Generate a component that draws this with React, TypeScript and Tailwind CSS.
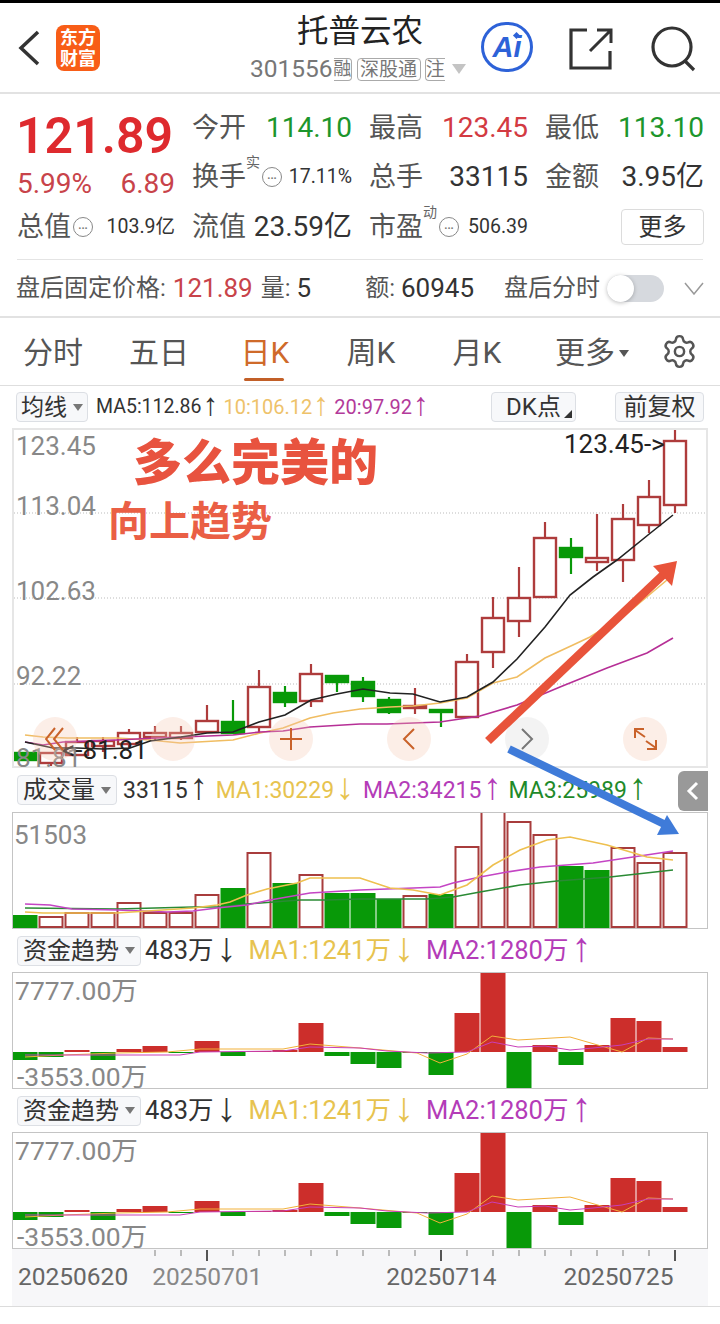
import React from "react";
import { Settings } from "lucide-react";

const FONT = "font-['Roboto','Noto_Sans_CJK_SC',sans-serif]";
const barX = (i: number) => 25 + 26 * i;

// wick top, body top, body bottom, wick bottom, rising
const candles: [number, number, number, number, boolean][] = [
  [753, 753, 760, 760, false],
  [752, 753, 763, 768, true],
  [737, 742, 755, 755, true],
  [737, 741, 746, 752, true],
  [729, 733, 744, 747, true],
  [726, 733, 737, 740, true],
  [726, 733, 738, 740, true],
  [705, 721, 732, 733, true],
  [700, 722, 733, 733, false],
  [670, 687, 727, 733, true],
  [686, 693, 702, 707, false],
  [664, 674, 701, 707, true],
  [676, 676, 682, 692, false],
  [677, 682, 696, 702, false],
  [697, 700, 712, 714, false],
  [688, 706, 708, 714, true],
  [710, 710, 712, 727, false],
  [654, 662, 717, 717, true],
  [597, 618, 652, 668, true],
  [567, 598, 621, 637, true],
  [522, 538, 597, 597, true],
  [538, 548, 557, 574, false],
  [514, 558, 562, 571, true],
  [504, 519, 560, 582, true],
  [480, 497, 525, 533, true],
  [428, 441, 505, 513, true],
];

const ma5 = "25,742 53,748 77,748 103,749 130,748 150,741 181,737 207,733 233,732 259,722 285,715 311,700 337,694 363,689 390,693 413,694 440,702 467,697 493,682 517,659 545,627 570,595 593,577 617,560 648,535 673,515";
const ma10 = "25,735 43,737 67,738 117,738 150,740 180,743 233,740 260,733 283,728 310,718 333,713 360,709 390,707 413,706 440,703 467,698 493,683 517,677 545,658 573,645 590,637 625,615 667,580";
const ma20 = "25,742 43,745 63,742 117,740 157,738 233,735 260,732 283,731 310,727 360,724 387,724 440,722 480,716 517,705 560,687 607,668 647,653 673,638";

// top of each volume bar, bars stand on y=928
const volumes: [number, boolean][] = [
  [915, false], [917, true], [913, true], [913, true], [903, true], [913, true], [913, true],
  [895, true], [888, false], [853, true], [883, false], [875, true], [893, false], [893, false],
  [899, false], [896, true], [894, false], [847, true], [812, true], [822, true], [835, true],
  [866, false], [870, false], [848, true], [863, true], [853, true],
];

const volMa1 = "25,912 43,913 117,913 193,908 217,905 230,902 247,895 267,889 297,883 310,878 360,878 390,888 413,890 440,895 467,885 493,865 520,850 547,840 570,837 607,845 647,857 673,860";
const volMa2 = "25,904 50,905 72,909 117,910 167,912 193,911 217,908 247,905 270,900 310,893 360,890 440,887 453,883 480,877 507,872 540,867 593,863 633,857 673,851";
const volMa3 = "25,908 117,909 193,907 220,907 247,904 300,900 327,900 360,899 427,899 453,897 480,892 520,885 557,881 610,877 673,870";

// bar end of the fund flow chart, measured from the zero line at y=1052
const flows = [8, 5, -2, 8, -3, -6, 0, -11, 4, -1, -2, -29, 4, 12, 16, 1, 23, -39, -80, 37, -7, 13, -7, -34, -31, -5];
const flowMa1 = "25,1057 63,1055 117,1053 167,1052 200,1049 283,1049 310,1044 360,1048 417,1053 440,1063 467,1054 492,1036 518,1040 570,1037 622,1052 648,1038 673,1039";
const flowMa2 = "25,1055 63,1055 117,1055 180,1055 200,1052 283,1051 310,1047 360,1048 387,1051 427,1053 467,1052 492,1042 518,1047 545,1046 570,1050 593,1048 622,1045 648,1039 673,1039";

const Arrow = ({ glyph, className = "" }: { glyph: string; className?: string }) => (
  <span className={`inline-flex w-[14px] -translate-y-[0.07em] justify-center font-['Liberation_Sans',sans-serif] text-[1.6em] leading-[0.6] ${className}`}>{glyph}</span>
);

const Cell = ({ label, value, sup, small, w, valueClass = "text-[#333]" }: { label: string; value: string; sup?: string; small?: boolean; w: string; valueClass?: string }) => (
  <div className={`flex items-center ${w}`}>
    <span className="text-[27px] leading-none text-[#555]">{label}</span>
    {small !== undefined && (
      <span className={`relative flex h-[20px] w-[20px] items-center justify-center rounded-full border-[1.5px] border-[#888] text-[11px] font-bold leading-none text-[#777] ${sup ? "ml-[16px]" : "ml-[2px]"}`}>
        {sup && <span className="absolute -top-[13px] left-[-17px] text-[14px] font-normal text-[#666]">{sup}</span>}
        <span className="-mt-[4px]">...</span>
      </span>
    )}
    <span className={`ml-auto leading-none ${small ? "text-[19.5px]" : "text-[28px]"} ${valueClass}`}>{value}</span>
  </div>
);

const Picker = ({ label, w, text = "text-[24px]", arrow = true }: { label: string; w: string; text?: string; arrow?: boolean }) => (
  <div className={`flex h-[30px] items-center justify-center gap-1.5 rounded-[4px] border border-[#dcdfe4] bg-[#f7f8fa] ${w}`}>
    <span className={`${text} leading-none text-[#333]`}>{label}</span>
    {arrow && <span className="h-0 w-0 border-x-[5px] border-t-[7px] border-x-transparent border-t-[#777]" />}
  </div>
);

const FundHeader = () => (
  <div className="flex h-[43px] items-center pl-[17px] text-[25.5px] leading-none">
    <Picker label="资金趋势" w="w-[124px]" />
    <span className="ml-[4px] text-[#333]">483万</span>
    <Arrow glyph="↓" className="ml-[6px] text-[#333]" />
    <span className="ml-[15px] text-[#e7c34f]">MA1:1241万</span>
    <Arrow glyph="↓" className="ml-[6px] text-[#e7c34f]" />
    <span className="ml-[15px] text-[#b43cb8]">MA2:1280万</span>
    <Arrow glyph="↑" className="ml-[6px] text-[#b43cb8]" />
  </div>
);

const FundChart = () => (
  <div className="relative ml-[12px] h-[117px] w-[696px] border border-[#c4c4c4]">
    <svg viewBox="13 973 694 115" className="block h-full w-full">
      {flows.map((v, i) => (
        <rect
          key={i}
          x={barX(i) - 12.5}
          y={v < 0 ? 1052 + v : 1052}
          width={25}
          height={Math.max(Math.abs(v), 1)}
          fill={v < 0 ? "#cc2e2b" : "#089908"}
        />
      ))}
      <polyline points={flowMa1} fill="none" stroke="#f2b13a" strokeWidth="1" />
      <polyline points={flowMa2} fill="none" stroke="#c93fb8" strokeWidth="1" />
    </svg>
    <span className="absolute left-[2px] top-[5px] text-[26.5px] leading-[26px] text-[#888]">7777.00万</span>
    <span className="absolute left-[4px] bottom-[-2px] text-[26.5px] leading-[26px] text-[#888]">-3553.00万</span>
  </div>
);

export default function App() {
  return (
    <div className={`relative h-[1324px] w-[720px] overflow-hidden bg-white ${FONT}`}>
      <div className="h-[3px] bg-black" />

      {/* Header */}
      <div className="relative flex h-[89px] items-start">
        <svg width="22" height="36" viewBox="0 0 22 36" className="ml-[18px] mt-[27px]">
          <polyline points="20,2 3,18 20,34" fill="none" stroke="#333" strokeWidth="3.5" />
        </svg>
        <div className="ml-[16px] mt-[22px] flex h-[46px] w-[44px] flex-col items-center justify-center rounded-[8px] bg-[#f85d17] text-[18px] font-bold leading-[21px] text-white">
          <span>东方</span>
          <span>财富</span>
        </div>
        <div className="ml-[150px] flex w-[216px] flex-col items-start">
          <span className="ml-[47px] mt-[12px] text-[31.5px] leading-[34px] text-[#222]">托普云农</span>
          <div className="mt-[8px] flex items-center text-[#777]">
            <span className="text-[24.5px] leading-none">301556</span>
            <span className="ml-px flex h-[23px] w-[18px] items-center justify-center rounded-r-[4px] border border-l-0 border-[#aaa] text-[18px] leading-none">融</span>
            <span className="ml-[5px] flex h-[23px] w-[64px] items-center justify-center rounded-[4px] border border-[#aaa] text-[19px] leading-none">深股通</span>
            <span className="ml-[4px] flex h-[23px] w-[20px] items-center justify-center rounded-l-[4px] border border-r-0 border-[#aaa] text-[19px] leading-none">注</span>
            <span className="ml-[7px] h-0 w-0 border-x-[7px] border-t-[10px] border-x-transparent border-t-[#c4c4c4]" />
          </div>
        </div>
        <div className="relative ml-[15px] mt-[19px] flex h-[50px] w-[52px] items-center justify-center rounded-full border-[3px] border-[#2d62d8]">
          <span className="font-['Liberation_Sans',sans-serif] text-[29px] font-bold italic leading-none text-[#2d62d8]">Ai</span>
          <span className="absolute right-[11px] top-[8px] h-[5px] w-[5px] rotate-45 bg-[#2d62d8]" />
        </div>
        <svg width="44" height="44" viewBox="0 0 44 44" className="ml-[36px] mt-[24px]">
          <path d="M18 3H2V41H41V24" fill="none" stroke="#333" strokeWidth="3.2" />
          <path d="M21 24L42 3M28 3H42V16" fill="none" stroke="#333" strokeWidth="3" />
        </svg>
        <svg width="46" height="46" viewBox="0 0 46 46" className="ml-[37px] mt-[23px]">
          <circle cx="22" cy="21" r="19" fill="none" stroke="#333" strokeWidth="3.2" />
          <path d="M35 35L44 44" stroke="#333" strokeWidth="3.2" />
        </svg>
      </div>
      <div className="h-[2px] bg-[#e2e2e2]" />

      {/* Quote */}
      <div className="h-[165px] pl-[17px] pr-[16px]">
        <div className="flex">
          <div className="w-[175px]">
            <div className="-ml-px mt-[13px] h-[59px] text-[50px] font-semibold leading-[58px] text-[#de2a2e]">121.89</div>
            <div className="mt-[2px] flex w-[158px] justify-between text-[28px] leading-[32px] text-[#c8434a]">
              <span>5.99%</span>
              <span>6.89</span>
            </div>
          </div>
          <div className="flex-1">
            <div className="mt-[20px] flex h-[28px] gap-[17px]">
              <Cell label="今开" value="114.10" w="w-[160px]" valueClass="text-[#1c962c]" />
              <Cell label="最高" value="123.45" w="w-[159px]" valueClass="text-[#d33a42]" />
              <Cell label="最低" value="113.10" w="w-[159px]" valueClass="text-[#1c962c]" />
            </div>
            <div className="mt-[21px] flex h-[28px] gap-[17px]">
              <Cell label="换手" sup="实" small value="17.11%" w="w-[160px]" />
              <Cell label="总手" value="33115" w="w-[159px]" />
              <Cell label="金额" value="3.95亿" w="w-[159px]" />
            </div>
          </div>
        </div>
        <div className="mt-[9px] flex h-[36px] items-center">
          <div className="w-[175px] pr-[17px]">
            <Cell label="总值" small value="103.9亿" w="w-[158px]" />
          </div>
          <Cell label="流值" value="23.59亿" w="w-[160px]" />
          <div className="ml-[17px]">
            <Cell label="市盈" sup="动" small value="506.39" w="w-[159px]" />
          </div>
          <div className="ml-auto flex h-[36px] w-[83px] items-center justify-center rounded-[4px] border border-[#dcdcdc] text-[24px] text-[#333]">更多</div>
        </div>
      </div>
      <div className="mx-[17px] h-px bg-[#e4e4e4]" />

      {/* After hours */}
      <div className="flex h-[56px] items-center pl-[16px] text-[24px] leading-none text-[#555]">
        <span>盘后固定价格:</span>
        <span className="ml-[7px] text-[26px] text-[#c8434a]">121.89</span>
        <span className="ml-[8px]">量:</span>
        <span className="ml-[6px] text-[26px] text-[#333]">5</span>
        <span className="ml-[54px]">额:</span>
        <span className="ml-[6px] text-[26px] text-[#333]">60945</span>
        <span className="ml-[30px]">盘后分时</span>
        <div className="ml-[7px] h-[27px] w-[57px] rounded-full bg-[#d6d9de]">
          <div className="h-[27px] w-[27px] rounded-full bg-white shadow-[0_1px_4px_rgba(0,0,0,0.25)]" />
        </div>
        <svg width="20" height="13" viewBox="0 0 20 13" fill="none" stroke="#999" strokeWidth="1.5" className="ml-[20px]">
          <path d="M1 1L10 12L19 1" />
        </svg>
      </div>
      <div className="h-[2px] bg-[#e2e2e2]" />

      {/* Tabs */}
      <div className="flex h-[67px] items-center pt-[3px] text-[30px] leading-none text-[#555]">
        <span className="w-[106px] text-center">分时</span>
        <span className="w-[106px] text-center">五日</span>
        <span className="relative w-[106px] text-center text-[#cf6a2a]">
          日K
          <span className="absolute left-[32px] top-[40px] h-[3px] w-[40px] rounded-full bg-[#c25f28]" />
        </span>
        <span className="w-[106px] text-center">周K</span>
        <span className="w-[106px] text-center">月K</span>
        <span className="flex w-[124px] items-center justify-center gap-[4px]">
          更多
          <span className="h-0 w-0 border-x-[5px] border-t-[7px] border-x-transparent border-t-[#555]" />
        </span>
        <Settings className="-mt-[3px] ml-[7px] h-[37px] w-[37px] text-[#555]" strokeWidth={1.6} />
      </div>
      <div className="h-px bg-[#dedede]" />

      {/* MA legend */}
      <div className="flex h-[42px] items-center pl-[16px] pr-[16px] leading-none">
        <Picker label="均线" w="w-[72px]" text="text-[23px]" />
        <span className="ml-[8px] flex items-center text-[19.5px] text-[#333]">MA5:112.86<Arrow glyph="↑" className="ml-[2px]" /></span>
        <span className="ml-[6px] flex items-center text-[20px] text-[#eec26a]">10:106.12<Arrow glyph="↑" className="ml-[2px]" /></span>
        <span className="ml-[6px] flex items-center text-[20px] text-[#b33a9a]">20:97.92<Arrow glyph="↑" className="ml-[2px]" /></span>
        <div className="relative ml-auto flex h-[30px] w-[85px] items-center justify-center rounded-[4px] border border-[#dcdfe4] bg-[#f7f8fa] text-[24px] text-[#333]">
          DK点
          <span className="absolute bottom-[3px] right-[3px] h-0 w-0 border-b-[8px] border-l-[8px] border-b-[#333] border-l-transparent" />
        </div>
        <div className="ml-[39px] flex h-[30px] w-[89px] items-center justify-center rounded-[4px] border border-[#dcdfe4] bg-[#f7f8fa] text-[24px] text-[#333]">前复权</div>
      </div>

      {/* K chart */}
      <div className="relative ml-[12px] h-[340px] w-[696px] border-2 border-[#e6e6e6]">
        <svg viewBox="14 430 692 336" className="block h-full w-full">
          {[513, 598, 684].map((y) => (
            <line key={y} x1="14" x2="706" y1={y} y2={y} stroke="#bbb" strokeWidth="1" strokeDasharray="1 2" />
          ))}
          {candles.map(([wt, bt, bb, wb, up], i) => {
            const c = up ? "#ae3c3c" : "#089908";
            return (
              <g key={i}>
                <line x1={barX(i)} x2={barX(i)} y1={wt} y2={wb} stroke={c} strokeWidth="2.2" />
                <rect
                  x={barX(i) - 11}
                  y={bt}
                  width={22}
                  height={bb - bt}
                  fill={up ? "#fff" : c}
                  stroke={c}
                  strokeWidth="2.4"
                />
              </g>
            );
          })}
          <polyline points={ma10} fill="none" stroke="#f0bd62" strokeWidth="1.6" />
          <polyline points={ma20} fill="none" stroke="#b62f96" strokeWidth="1.6" />
          <polyline points={ma5} fill="none" stroke="#222" strokeWidth="1.6" />
        </svg>
        <span className="absolute left-[2px] top-[3px] text-[26px] leading-[26px] text-[#888]">123.45</span>
        <span className="absolute left-[2px] top-[63px] text-[26px] leading-[26px] text-[#888]">113.04</span>
        <span className="absolute left-[2px] top-[148px] text-[26px] leading-[26px] text-[#888]">102.63</span>
        <span className="absolute left-[2px] top-[233px] text-[26px] leading-[26px] text-[#888]">92.22</span>
        <span className="absolute left-[2px] top-[315px] text-[26px] leading-[26px] text-[#888]">81.81</span>
        <span className="absolute left-[48px] top-[307px] text-[26px] leading-[26px] text-[#222]">&lt;-81.81</span>
        <span className="absolute left-[550px] top-[1px] text-[26px] leading-[26px] text-[#222]">123.45-&gt;</span>

        <span className="absolute left-[119px] top-[6px] text-[49px] font-black leading-[56px] text-[#e8533f]">多么完美的</span>
        <span className="absolute left-[94px] top-[70px] text-[41px] font-bold leading-[44px] text-[#ea5f45]">向上趋势</span>

        {/* Chart controls */}
        <div className="absolute left-[19px] top-[287px] flex gap-[74px]">
          <div className="flex h-[44px] w-[44px] items-center justify-center rounded-full bg-[#f6c8ae]/30">
            <svg width="20" height="26" viewBox="0 0 20 26" fill="none" stroke="#c9622a" strokeWidth="2">
              <path d="M10 2L1 13L10 24M18 2L9 13L18 24" />
            </svg>
          </div>
          <div className="h-[44px] w-[44px] rounded-full bg-[#f6c8ae]/30" />
          <div className="flex h-[44px] w-[44px] items-center justify-center rounded-full bg-[#f6c8ae]/30">
            <svg width="22" height="22" viewBox="0 0 22 22" fill="none" stroke="#c9622a" strokeWidth="2">
              <path d="M0 11H22M11 0V22" />
            </svg>
          </div>
          <div className="flex h-[44px] w-[44px] items-center justify-center rounded-full bg-[#f6c8ae]/30">
            <svg width="14" height="24" viewBox="0 0 14 24" fill="none" stroke="#c9622a" strokeWidth="2">
              <path d="M12 2L2 12L12 22" />
            </svg>
          </div>
          <div className="flex h-[44px] w-[44px] items-center justify-center rounded-full bg-[#dcdcdc]/35">
            <svg width="14" height="24" viewBox="0 0 14 24" fill="none" stroke="#777" strokeWidth="2">
              <path d="M2 2L12 12L2 22" />
            </svg>
          </div>
          <div className="flex h-[44px] w-[44px] items-center justify-center rounded-full bg-[#f6c8ae]/30">
            <svg width="24" height="24" viewBox="0 0 24 24" fill="none" stroke="#c9622a" strokeWidth="2">
              <path d="M12 10L2 3M2 11V2H11M13 14L23 21M23 13V22H14" />
            </svg>
          </div>
        </div>
      </div>

      {/* Volume */}
      <div className="relative flex h-[44px] items-center pl-[17px] text-[23px] leading-none">
        <Picker label="成交量" w="w-[100px]" />
        <span className="ml-[6px] text-[#333]">33115</span>
        <Arrow glyph="↑" className="ml-[4px] text-[#333]" />
        <span className="ml-[10px] text-[#e7c34f]">MA1:30229</span>
        <Arrow glyph="↓" className="ml-[4px] text-[#e7c34f]" />
        <span className="ml-[11px] text-[#b43cb8]">MA2:34215</span>
        <Arrow glyph="↑" className="ml-[4px] text-[#b43cb8]" />
        <span className="ml-[9px] text-[#1f8a2a]">MA3:25989</span>
        <Arrow glyph="↑" className="ml-[4px] text-[#1f8a2a]" />
        <div className="absolute right-[12px] top-[3px] flex h-[40px] w-[30px] items-center justify-center rounded-l-[6px] bg-[#999]">
          <svg width="14" height="22" viewBox="0 0 14 22" fill="none" stroke="#fff" strokeWidth="3">
            <path d="M11 3L3 11L11 19" />
          </svg>
        </div>
      </div>
      <div className="relative ml-[12px] h-[117px] w-[696px] border border-[#c4c4c4]">
        <svg viewBox="13 813 694 115" className="block h-full w-full">
          {volumes.map(([top, up], i) => (
            <rect
              key={i}
              x={barX(i) - (up ? 11.5 : 12.5)}
              y={top}
              width={up ? 23 : 25}
              height={up ? 928 - top - 1 : 928 - top}
              fill={up ? "#fff" : "#089908"}
              stroke={up ? "#a83c3c" : "none"}
              strokeWidth="2"
            />
          ))}
          <polyline points={volMa3} fill="none" stroke="#2a8a34" strokeWidth="1.6" />
          <polyline points={volMa2} fill="none" stroke="#c445c4" strokeWidth="1.6" />
          <polyline points={volMa1} fill="none" stroke="#eec04f" strokeWidth="1.6" />
        </svg>
        <span className="absolute left-px top-[9px] text-[26px] leading-[26px] text-[#888]">51503</span>
      </div>

      {/* Fund flow */}
      <FundHeader />
      <FundChart />
      <FundHeader />
      <FundChart />

      {/* Time axis */}
      <div className="relative ml-[12px] h-[57px] w-[696px] bg-[#f7f7f9]">
        <svg viewBox="12 1249 696 14" className="absolute left-0 top-0 h-[14px] w-[696px]">
          {Array.from({ length: 21 }, (_, n) => 155 + 26 * n).map((x) => (
            <line
              key={x}
              x1={x}
              x2={x}
              y1={1250}
              y2={(x - 207) % 234 === 0 ? 1261 : 1256}
              stroke={(x - 207) % 234 === 0 ? "#555" : "#bbb"}
              strokeWidth="2"
            />
          ))}
        </svg>
        <div className="flex pt-[14px] text-[24.5px] leading-[28px] text-[#666]">
          <span className="ml-[6px]">20250620</span>
          <span className="ml-[24px] text-[#888]">20250701</span>
          <span className="ml-[124px]">20250714</span>
          <span className="ml-[67px]">20250725</span>
        </div>
      </div>
      <div className="h-px bg-[#dcdcdc]" />

      {/* Hand-drawn arrows on top of the screenshot */}
      <svg viewBox="0 0 720 1324" className="pointer-events-none absolute left-0 top-0 h-[1324px] w-[720px]">
        <path d="M488 741L664 574" stroke="#e8533a" strokeWidth="8.5" fill="none" />
        <path d="M677 561L653 566L672 586Z" fill="#e8533a" />
        <path d="M509 749L664 824" stroke="#3f7bd9" strokeWidth="8" fill="none" />
        <path d="M679 834L657 835L667 815Z" fill="#3f7bd9" />
      </svg>
    </div>
  );
}
